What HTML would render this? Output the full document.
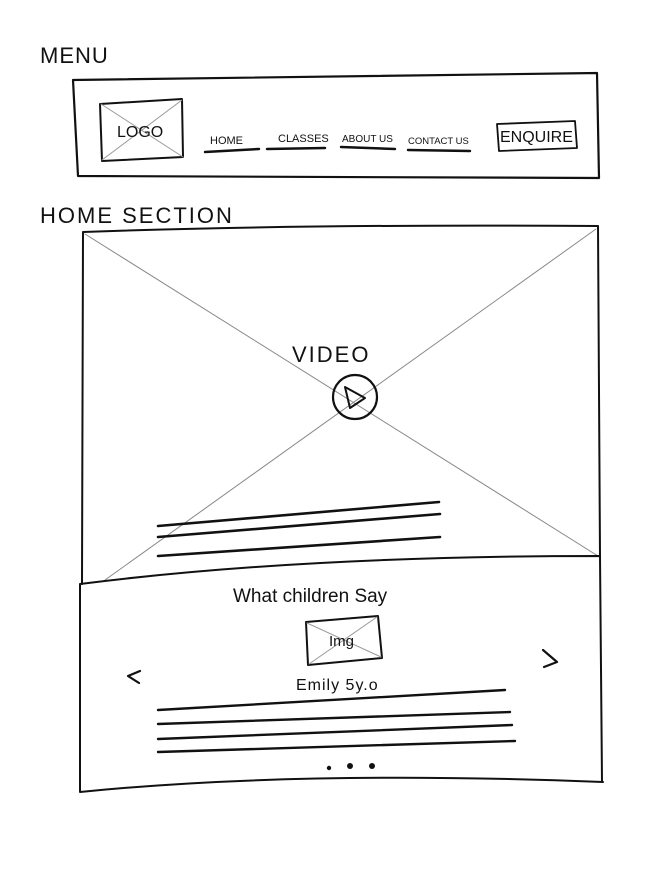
<!DOCTYPE html>
<html><head><meta charset="utf-8"><style>
html,body{margin:0;padding:0;background:#fff;width:660px;height:880px;overflow:hidden}
svg{display:block}
text{font-family:"Liberation Sans",sans-serif;fill:#111}
</style></head><body>
<svg width="660" height="880" viewBox="0 0 660 880" xmlns="http://www.w3.org/2000/svg">
<g fill="none" stroke="#111" stroke-linecap="round" stroke-linejoin="round">
<path d="M73 80 L597 73 L599 178 L78 176 Z" stroke-width="2.2"/>
<path d="M100 104 L182 99 L183 157 L102 161 Z" stroke-width="2"/>
<path d="M101 104 L183 157 M182 100 L102 160" stroke="#999" stroke-width="1"/>
<path d="M205 152 L259 149" stroke-width="2.5"/>
<path d="M267 149 L325 148 M341 147 L395 149 M408 150 L470 151" stroke-width="2.5"/>
<path d="M497 124 L575 121 L577 148 L499 151 Z" stroke-width="1.8"/>
<path d="M83 232 Q300 224 598 226 L600 556 M83 232 L82 584" stroke-width="2"/>
<path d="M85 234 L598 556 M596 229 L105 580" stroke="#888" stroke-width="1"/>
<path d="M158 526 L439 502 M158 537 L440 514 M158 556 L440 537" stroke-width="2.6"/>
<circle cx="355" cy="397" r="22" stroke-width="2.2"/>
<path d="M345 387 L350 408 L365 398 Z" stroke-width="2"/>
<path d="M80 584 Q300 556 600 556 L602 782 M80 584 L80 792 Q300 770 603 782" stroke-width="2"/>
<path d="M306 622 L378 616 L382 658 L308 665 Z" stroke-width="2"/>
<path d="M307 623 L381 657 M377 617 L309 664" stroke="#999" stroke-width="1"/>
<path d="M140 671 L128 676 L139 683 M543 650 L557 662 L544 667" stroke-width="2.2"/>
<path d="M158 710 L505 690 M158 724 L510 712 M158 739 L512 725 M158 752 L515 741" stroke-width="2.4"/>
</g>
<circle cx="329" cy="768" r="2.2" fill="#111"/>
<circle cx="350" cy="766" r="3" fill="#111"/>
<circle cx="372" cy="766" r="3" fill="#111"/>
<text x="40" y="63" font-size="22" letter-spacing="1">MENU</text>
<text x="40" y="223" font-size="22" letter-spacing="2">HOME SECTION</text>
<text x="117" y="137" font-size="16">LOGO</text>
<text x="210" y="144" font-size="11">HOME</text>
<text x="278" y="142" font-size="11">CLASSES</text>
<text x="342" y="142" font-size="10">ABOUT US</text>
<text x="408" y="144" font-size="9.5">CONTACT US</text>
<text x="500" y="142" font-size="16">ENQUIRE</text>
<text x="292" y="362" font-size="22" letter-spacing="2">VIDEO</text>
<text x="233" y="602" font-size="19">What children Say</text>
<text x="329" y="646" font-size="15">Img</text>
<text x="296" y="690" font-size="16" letter-spacing="1">Emily 5y.o</text>
</svg>
</body></html>
